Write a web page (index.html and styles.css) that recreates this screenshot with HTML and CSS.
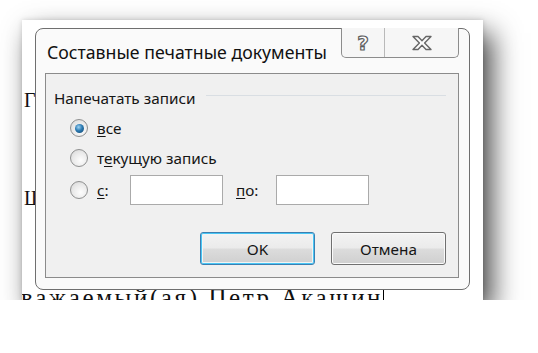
FILE: index.html
```html
<!DOCTYPE html>
<html lang="ru">
  <head>
    <meta charset="UTF-8" />
    <meta name="viewport" content="width=device-width, initial-scale=1.0" />
    <title>Составные печатные документы</title>

    <link rel="stylesheet" href="styles.css">
  </head>
  <body>
    <div class="shot">
      <div class="doc">
        <p class="line first">Г</p>
        <p class="line second">Ш</p>
        <p class="line third">уважаемый(ая) Петр Акашин<span class="caret"></span></p>
      </div>

      <div class="dialog">
        <div class="titlebar">
          <span class="title">Составные печатные документы</span>
          <div class="caption">
            <span class="cbtn help">?</span>
            <span class="cbtn close">
              <svg width="22" height="16" viewBox="0 0 22 16">
                <path d="M2 1.5h5l4 4.2 4-4.2h5l-6.4 6.5 6.4 6.5h-5l-4-4.2-4 4.2h-5l6.4-6.5z" fill="#fbfbfb" stroke="#666" stroke-width="1.4" stroke-linejoin="round" />
              </svg>
            </span>
          </div>
        </div>

        <div class="client">
          <div class="group-head">
            <span>Напечатать записи</span>
            <i class="rule"></i>
          </div>

          <label class="opt">
            <span class="radio on"></span>
            <span><u>в</u>се</span>
          </label>
          <label class="opt">
            <span class="radio"></span>
            <span>т<u>е</u>кущую запись</span>
          </label>
          <div class="opt range">
            <span class="radio"></span>
            <span class="lbl-from"><u>с</u>:</span>
            <span class="field"></span>
            <span class="lbl-to"><u>п</u>о:</span>
            <span class="field"></span>
          </div>

          <div class="buttons">
            <button class="btn default">OK</button>
            <button class="btn">Отмена</button>
          </div>
        </div>
      </div>
    </div>
  </body>
</html>
```

FILE: styles.css
```css
body {
  margin: 0;
  background: #fff;
}

.shot {
  position: relative;
  margin: 20px 0 0 22px;
  width: 461px;
  height: 280px;
  background: #fff;
  overflow: hidden;
  box-shadow: 9px 13px 26px rgba(0, 0, 0, 0.72), 0 0 5px rgba(0, 0, 0, 0.15);
}

/* document behind the dialog */
.doc {
  padding: 69px 0 0 2px;
  font-family: "Liberation Serif", serif;
  font-size: 20px;
  color: #111;
}

.line {
  margin: 0;
  line-height: 23px;
  white-space: nowrap;
}

.second {
  margin-top: 75px;
}

.third {
  margin-top: 76px;
  font-size: 25px;
  letter-spacing: 2.6px;
  text-indent: -18px;
}

.caret {
  display: inline-block;
  width: 1px;
  height: 26px;
  background: #000;
  vertical-align: middle;
}

/* dialog window */
.dialog {
  position: absolute;
  left: 13px;
  top: 8px;
  width: 435px;
  height: 262px;
  box-sizing: border-box;
  border: 1px solid #6f6f6f;
  border-radius: 8px;
  background: #fafafa;
  padding: 0 10px 11px 9px;
  display: flex;
  flex-direction: column;
  font-family: "Noto Sans", sans-serif;
  color: #1b1b1b;
}

.titlebar {
  height: 44px;
  display: flex;
  align-items: flex-start;
}

.title {
  margin: 12px 0 0 2px;
  font-size: 17.7px;
  line-height: 22px;
  color: #111;
}

.caption {
  margin: -1px 0 0 auto;
  display: flex;
  height: 29px;
  border: 1px solid #8c8c8c;
  border-top: none;
  border-radius: 0 0 5px 5px;
  background: #f6f6f6;
}

.cbtn {
  display: flex;
  align-items: center;
  justify-content: center;
}

.help {
  width: 42px;
  border-right: 1px solid #b9b9b9;
  font-family: "DejaVu Sans", sans-serif;
  font-size: 20px;
  font-weight: bold;
  color: #fbfbfb;
  -webkit-text-stroke: 1.2px #5e5e5e;
}

.close {
  width: 73px;
}

.client {
  flex: 1;
  box-sizing: border-box;
  border: 1px solid #8b8b8b;
  background: #f0f0f0;
  display: flex;
  flex-direction: column;
  padding: 14px 12px 12px 0;
  font-size: 15.3px;
  color: #151515;
}

.group-head {
  display: flex;
  align-items: center;
  height: 20px;
  margin-left: 8px;
}

.rule {
  flex: 1;
  height: 1px;
  margin: -5px 0 0 11px;
  background: #d9dee3;
}

.opt {
  display: flex;
  align-items: center;
  height: 30px;
  padding-left: 24px;
}

.opt:first-of-type {
  margin-top: 5px;
}

.range {
  margin-top: 2px;
}

.opt u {
  text-decoration-thickness: 1px;
  text-underline-offset: 2px;
}

.radio {
  width: 16px;
  height: 16px;
  margin-right: 9px;
  border: 1px solid #8f9090;
  border-radius: 50%;
  background: radial-gradient(circle at 60% 65%, #fdfdfd 0, #e9e9e9 55%, #d2d2d2 100%);
  display: flex;
  align-items: center;
  justify-content: center;
}

.radio.on::after {
  content: "";
  width: 9px;
  height: 9px;
  border-radius: 50%;
  background: radial-gradient(circle at 40% 35%, #9fd4f4 0, #2b7ab2 45%, #0d3e66 100%);
}

.lbl-from {
  width: 33px;
}

.field {
  width: 91px;
  height: 28px;
  border: 1px solid #aaa;
  background: #fff;
}

.lbl-to {
  width: 40px;
  margin-left: 13px;
}

.buttons {
  margin-top: auto;
  display: flex;
  justify-content: flex-end;
  gap: 16px;
}

.btn {
  width: 115px;
  height: 33px;
  border: 1px solid #707070;
  border-radius: 3px;
  background: linear-gradient(#f3f3f3, #ebebeb 48%, #dcdcdc 52%, #cfcfcf);
  font-family: "Noto Sans", sans-serif;
  font-size: 15.3px;
  color: #151515;
  box-shadow: inset 0 0 0 1px #fafafa;
}

.btn.default {
  border-color: #3c7fb1;
  box-shadow: inset 0 0 0 1px #48c6f5, inset 0 0 0 2px #f3f3f3;
}
```
